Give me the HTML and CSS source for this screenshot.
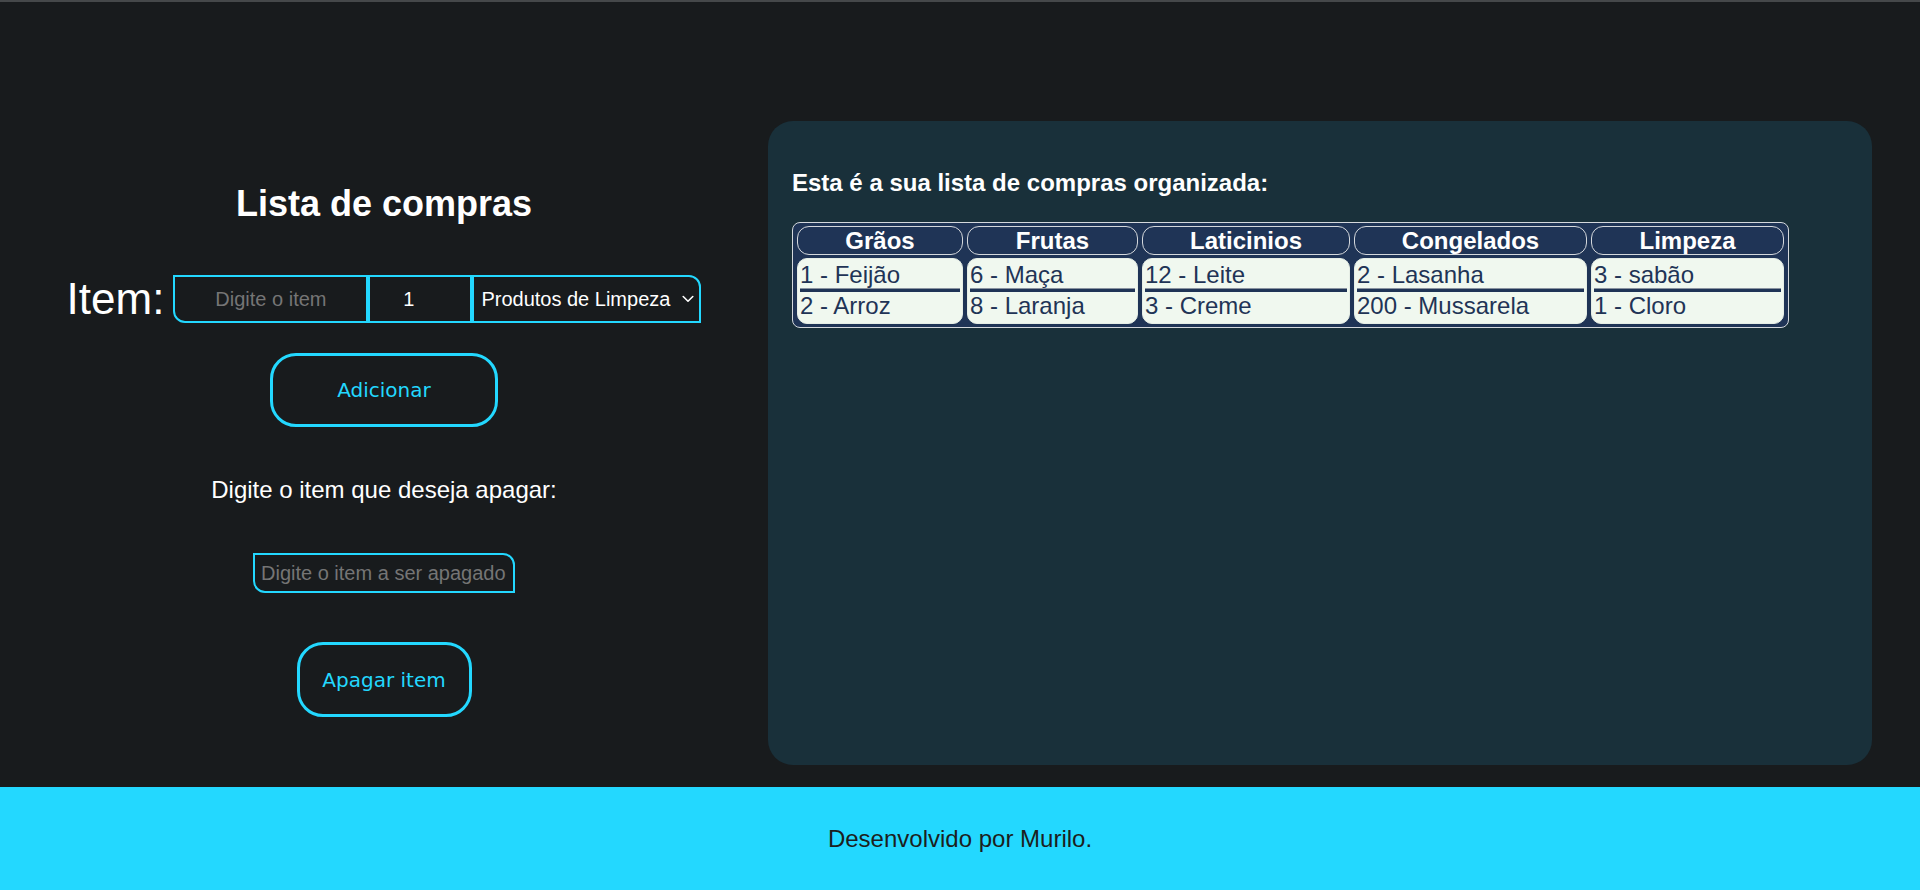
FILE: index.html
```html
<!DOCTYPE html>
<html lang="pt-BR">
<head>
<meta charset="utf-8">
<title>Lista de compras</title>
<link rel="stylesheet" href="styles.css">
</head>
<body>
<main class="main">
  <section class="left">
    <h1 class="title">Lista de compras</h1>
    <div class="add-row">
      <label class="item-label" for="nome">Item:</label>
      <div class="fields">
        <input id="nome" class="field f-name" type="text" placeholder="Digite o item">
        <input class="field f-qty" type="text" value="1">
        <div class="select-wrap">
          <select class="field f-cat">
            <option>Produtos de Limpeza</option>
          </select>
          <svg class="chev" width="12" height="8" viewBox="0 0 12 8"><path d="M1.2 1.5 L6 6.2 L10.8 1.5" fill="none" stroke="#ffffff" stroke-width="1.6" stroke-linecap="round" stroke-linejoin="round"/></svg>
        </div>
      </div>
    </div>
    <button class="btn btn-add">Adicionar</button>
    <p class="del-label">Digite o item que deseja apagar:</p>
    <input class="field f-del" type="text" placeholder="Digite o item a ser apagado">
    <button class="btn btn-del">Apagar item</button>
  </section>

  <section class="panel">
    <h2 class="panel-title">Esta é a sua lista de compras organizada:</h2>
    <table class="list">
      <thead>
        <tr>
          <th class="c1">Grãos</th>
          <th class="c2">Frutas</th>
          <th class="c3">Laticinios</th>
          <th class="c4">Congelados</th>
          <th class="c5">Limpeza</th>
        </tr>
      </thead>
      <tbody>
        <tr>
          <td><div class="it first">1 - Feijão</div><div class="it">2 - Arroz</div></td>
          <td><div class="it first">6 - Maça</div><div class="it">8 - Laranja</div></td>
          <td><div class="it first">12 - Leite</div><div class="it">3 - Creme</div></td>
          <td><div class="it first">2 - Lasanha</div><div class="it">200 - Mussarela</div></td>
          <td><div class="it first">3 - sabão</div><div class="it">1 - Cloro</div></td>
        </tr>
      </tbody>
    </table>
  </section>
</main>
<footer class="footer">Desenvolvido por Murilo.</footer>
</body>
</html>
```

FILE: styles.css
```css
html, body {
  margin: 0;
  padding: 0;
}

body {
  background: #181b1d;
  border-top: 2px solid #45484a;
  font-family: "Liberation Sans", Arial, sans-serif;
  color: #ffffff;
}

.main {
  display: flex;
  height: 785px;
}

/* ---------- left column ---------- */
.left {
  flex: none;
  width: 768px;
  box-sizing: border-box;
  padding-top: 181px;
  display: flex;
  flex-direction: column;
  align-items: center;
}

.title {
  margin: 0;
  font-size: 36px;
  font-weight: bold;
  line-height: normal;
}

.add-row {
  margin-top: 50px;
  display: flex;
  align-items: center;
  gap: 9px;
}

.item-label {
  font-size: 44px;
  line-height: 48px;
}

.fields {
  display: flex;
}

.field {
  box-sizing: border-box;
  background: transparent;
  border: 2px solid #23d8ff;
  color: #ffffff;
  font-family: "Liberation Sans", Arial, sans-serif;
  font-size: 20px;
  outline: none;
  margin: 0;
}

.field::placeholder {
  color: #757575;
}

.f-name {
  width: 195px;
  height: 48px;
  padding: 0 4px;
  text-align: center;
  border-radius: 0 0 0 12px;
}

.f-qty {
  width: 104px;
  height: 48px;
  padding: 0 23px 0 0;
  text-align: center;
}

.select-wrap {
  position: relative;
  display: flex;
}

.f-cat {
  -webkit-appearance: none;
  appearance: none;
  width: 229px;
  height: 48px;
  padding: 0 0 0 7px;
  border-radius: 0 12px 0 0;
}

.chev {
  position: absolute;
  right: 7px;
  top: 20px;
  pointer-events: none;
}

.btn {
  box-sizing: border-box;
  background: transparent;
  border: 3px solid #23d8ff;
  border-radius: 26px;
  color: #23d8ff;
  font-family: "DejaVu Sans", sans-serif;
  font-size: 20px;
  padding: 0;
  cursor: pointer;
}

.btn-add {
  margin-top: 30px;
  width: 228px;
  height: 74px;
}

.del-label {
  margin: 49px 0 0;
  font-size: 24px;
  line-height: normal;
}

.f-del {
  margin-top: 49px;
  width: 262px;
  height: 40px;
  padding: 0 2px 0 6px;
  border-radius: 0 12px 0 12px;
}

.btn-del {
  margin-top: 49px;
  width: 175px;
  height: 75px;
}

/* ---------- right panel ---------- */
.panel {
  flex: 1;
  box-sizing: border-box;
  height: 644px;
  margin: 119px 48px 0 0;
  padding: 24px;
  background: #19303a;
  border-radius: 25px;
}

.panel-title {
  margin: 24px 0 25px;
  font-size: 24px;
  font-weight: bold;
  line-height: normal;
}

.list {
  table-layout: fixed;
  width: 997px;
  border-collapse: separate;
  border-spacing: 4px 3px;
  background: #1f3456;
  border: 1px solid #d4d8dc;
  border-radius: 8px;
}

.list th {
  box-sizing: border-box;
  height: 29px;
  padding: 0;
  border: 1px solid #d4d8dc;
  border-radius: 12px;
  background: #1f3456;
  color: #ffffff;
  font-size: 24px;
  font-weight: bold;
  line-height: 27px;
  text-align: center;
}

.c1 { width: 166px; }
.c2 { width: 171px; }
.c3 { width: 208px; }
.c4 { width: 233px; }
.c5 { width: 193px; }

.list td {
  box-sizing: border-box;
  height: 66px;
  padding: 2px 2px 3px;
  border: 1px solid #e6eee6;
  border-radius: 10px;
  background: #f0f8ef;
  color: #1f3456;
  font-size: 24px;
  vertical-align: top;
  text-align: left;
}

.it {
  line-height: 28px;
}

.it.first {
  border-bottom: 3px solid #1f3456;
  box-shadow: 0 -1px 0 #8a93a0 inset;
}

/* ---------- footer ---------- */
.footer {
  height: 103px;
  display: flex;
  align-items: center;
  justify-content: center;
  background: #23d8ff;
  color: #1c1e20;
  font-size: 24px;
}
```
